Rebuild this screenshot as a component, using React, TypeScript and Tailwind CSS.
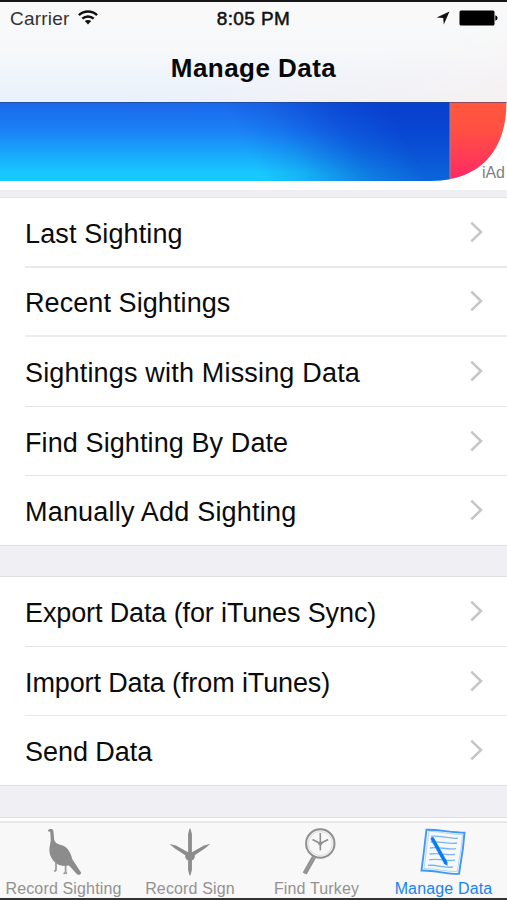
import type { ReactNode } from 'react';

type Row = { label: string; text: string; line: string };

const sightings: Row[] = [
  { label: 'Last Sighting', text: 'tracking-[0.12px]', line: 'h-[70px] border-b-2 border-[#e9e9ea]' },
  { label: 'Recent Sightings', text: 'tracking-[0.08px]', line: 'h-[69px] border-b-2 border-[#ececed]' },
  { label: 'Sightings with Missing Data', text: 'tracking-[0.18px]', line: 'h-[70px] border-b border-[#e4e4e6]' },
  { label: 'Find Sighting By Date', text: 'tracking-[0.1px]', line: 'h-[69px] border-b border-[#e4e4e6]' },
  { label: 'Manually Add Sighting', text: 'tracking-[0.2px]', line: 'h-[69px]' },
];

const transfers: Row[] = [
  { label: 'Export Data (for iTunes Sync)', text: 'tracking-[-0.12px]', line: 'h-[70px] border-b border-[#e4e4e6]' },
  { label: 'Import Data (from iTunes)', text: 'tracking-[-0.12px]', line: 'h-[69px] border-b border-[#e9e9ea]' },
  { label: 'Send Data', text: 'tracking-[-0.05px]', line: 'h-[69px]' },
];

function Chevron() {
  return (
    <svg className="mr-6 mb-px h-[22px] w-[13px] shrink-0" viewBox="0 0 13 22" fill="none" stroke="#c5c5c8" strokeWidth="2.5">
      <path d="M1.3 1.7 11 11 1.3 20.3" />
    </svg>
  );
}

function Group({ rows }: { rows: Row[] }) {
  return (
    <ul className="bg-white pl-[25px]">
      {rows.map((row) => (
        <li key={row.label} className={`flex items-center justify-between ${row.line}`}>
          <span className={`whitespace-nowrap pt-[3px] text-[27px] leading-8 text-[#0b0b0b] ${row.text}`}>{row.label}</span>
          <Chevron />
        </li>
      ))}
    </ul>
  );
}

function StatusBar() {
  return (
    <div className="grid h-[33px] grid-cols-3 items-center text-[19px] leading-6 text-[#111]">
      <div className="flex items-center gap-[9px] pl-[10px]">
        <span className="tracking-[0.2px] text-[#333]">Carrier</span>
        <svg className="mb-[2px] h-[15px] w-5" viewBox="0 0 20 15" fill="none" stroke="#111" strokeWidth="2.5">
          <path d="M.9 5.1C6.2.3 13.8.3 19.1 5.1" />
          <path d="M4.3 8.7C7.6 5.7 12.4 5.7 15.7 8.7" />
          <path d="M6.8 11.1C8.7 9.5 11.3 9.5 13.2 11.1L10 14.6Z" fill="#111" stroke="none" />
        </svg>
      </div>
      <span className="text-center tracking-[0.4px] [-webkit-text-stroke:0.5px_#111]">8:05 PM</span>
      <div className="flex items-center justify-end gap-[9px] pr-[9px]">
        <svg className="mb-px h-[14px] w-[14px]" viewBox="0 0 14 14" fill="#111">
          <path d="M13.5.5 7.8 13.4 7.2 7 .6 6.5Z" />
        </svg>
        <svg className="mb-px h-4 w-[39px]" viewBox="0 0 39 16" fill="#000">
          <rect x=".5" y=".5" width="35" height="15" rx="1.5" />
          <path d="M36.3 5.2Q38.6 5.8 38.6 8T36.3 10.8Z" />
        </svg>
      </div>
    </div>
  );
}

function Banner() {
  return (
    <div className="relative h-[88px] bg-white">
      <svg className="h-[79.5px] w-full" viewBox="0 0 507 79" preserveAspectRatio="none">
        <defs>
          <linearGradient id="sky" x2="0" y2="1">
            <stop stopColor="#1b67e9" />
            <stop offset=".35" stopColor="#1b80f6" />
            <stop offset=".9" stopColor="#18c9fe" />
            <stop offset="1" stopColor="#18c9fe" />
          </linearGradient>
          <linearGradient id="deep" gradientUnits="userSpaceOnUse" x1="240" y1="30" x2="370" y2="-35">
            <stop stopColor="#073dcc" stopOpacity="0" />
            <stop offset=".25" stopColor="#073dcc" stopOpacity=".2" />
            <stop offset=".65" stopColor="#073dcc" stopOpacity=".7" />
            <stop offset="1" stopColor="#073dcc" stopOpacity=".95" />
          </linearGradient>
          <linearGradient id="fade" x2="0" y2="1">
            <stop stopColor="#fff" />
            <stop offset="1" stopColor="#c0c0c0" />
          </linearGradient>
          <mask id="shade">
            <rect width="507" height="79" fill="url(#fade)" />
          </mask>
          <linearGradient id="coral" x2="0" y2="1">
            <stop stopColor="#ff583d" />
            <stop offset=".35" stopColor="#ff5042" />
            <stop offset="1" stopColor="#ff2868" />
          </linearGradient>
          <clipPath id="edge">
            <path d="M0 0H506.3C507 40 487 78.5 430 78.5H0Z" />
          </clipPath>
        </defs>
        <g clipPath="url(#edge)">
          <rect width="450" height="79" fill="url(#sky)" />
          <rect width="450" height="79" fill="url(#deep)" mask="url(#shade)" />
          <rect x="450" width="57" height="79" fill="url(#coral)" />
          <path d="M450 0V79" stroke="#8c8aa3" />
        </g>
        <path d="M0 .5H507" stroke="#263a75" strokeOpacity=".5" />
      </svg>
      <span className="absolute right-[2px] top-[61px] text-[16px] leading-5 text-[#808080]">iAd</span>
    </div>
  );
}

function Turkey() {
  return (
    <svg className="ml-[3px] h-[48px] w-9" viewBox="0 0 36 48" fill="#8c8c8c">
      <path d="M1 2.2C2.5.7 5.8.5 6.4 2.9L7.2 12C8.2 15 11 16.4 15 17.2C20 18.5 23.7 24 25.2 31L34 44.5C34.4 46.5 31.7 47.6 30 46.3L22 37.5C18 38.3 12.5 38 9 35.2C4.3 31.5 2.1 26 2.4 21C2.6 17 3.9 14.2 3.7 10.5L3.2 3.7 1 3.3Z" />
      <path d="M9 35V42L7.3 43.5M18.6 37V44.7L16.5 45.7M18.6 44.7 20 45.5" fill="none" stroke="#999" strokeWidth="1.7" />
    </svg>
  );
}

function Track() {
  return (
    <svg className="h-[48px] w-[42px]" viewBox="0 0 42 48" fill="#8c8c8c">
      <path d="M20.6.5H21.4L22.9 6V24.2L35 17.5 41.5 15.8 36.5 20 25.7 27.2Q26.6 30.3 22.9 32.5V42L21.4 47.5H20.6L19.1 42V32.5Q15.4 30.3 16.3 27.2L5.5 20.3.5 16 7 17.5 19.1 24.2V6Z" />
    </svg>
  );
}

function Magnifier() {
  return (
    <svg className="ml-[5px] h-[48px] w-[34px]" viewBox="0 0 34 48" fill="none" stroke="#8f8f8f">
      <circle cx="18.3" cy="15.5" r="14.2" strokeWidth="2" />
      <circle cx="18.3" cy="15.5" r="12" stroke="#dcdcdc" />
      <path d="M12 29 2.7 45.5" strokeWidth="4.5" />
      <path d="M12 29 2.7 45.5" stroke="#a2a2a2" strokeWidth="1" />
      <path d="M18.3 5V22.5M10.5 11.5 18.3 15.5 26.2 11.5" strokeWidth="1.6" />
      <circle cx="18.3" cy="15.6" r="2" fill="#8f8f8f" stroke="none" />
    </svg>
  );
}

function Notepad() {
  return (
    <svg className="mr-[2px] h-[48px] w-[46px]" viewBox="0 0 46 48" fill="none" stroke="#3e98f8">
      <path d="M6.5 1.7C17 1.4 32 4.5 44.5 4.6L43 20 39 45.8C28 46.5 16 42.2 1.5 42.5L4.2 21Z" strokeWidth="1.9" />
      <path d="M8.8 3.5 6.2 24 4 40.5C17 40.4 27 43.8 37.2 43.6L41.2 20 42.5 6.5C29 6.5 20 3.2 8.8 3.5Z" stroke="#a5cefb" strokeWidth=".8" />
      <path d="M11 8.3C20 7 28 11 38 10.2M10.5 14C20 12.8 29 16.5 37 15M10 20C19 18.4 27 22 36 20.6M9.5 26C18 24.3 27 27.5 35 26.5M9 31.8C18 30 26 33 35 32.2M8 37.4C17 36.3 25 40.5 33 39" stroke="#77b5fa" strokeWidth="1.3" />
      <path d="M12.5 10.8 25.5 34.3" stroke="#087df5" strokeWidth="3.6" strokeLinecap="round" />
      <path d="M23.7 35.3 27.5 38 27.3 33.3Z" fill="#087df5" stroke="none" />
    </svg>
  );
}

function Tab({ label, icon, active }: { label: string; icon: ReactNode; active?: boolean }) {
  return (
    <div className={`flex flex-col items-center pt-[10px] ${active ? 'text-[#1782f5]' : 'text-[#929292]'}`}>
      {icon}
      <span className="mt-[3px] whitespace-nowrap text-[16px] leading-[20px] tracking-[0.15px]">{label}</span>
    </div>
  );
}

export default function App() {
  return (
    <div className="flex h-[900px] w-[507px] flex-col overflow-hidden border-t-2 border-b-2 border-t-[#161616] border-b-[#333] bg-[#efeff4] font-['Liberation_Sans',Arial,sans-serif]">
      <header className="h-[100px] shrink-0 bg-[linear-gradient(170deg,transparent_60%,#fff0eb99),linear-gradient(#f9f9f9_0%,#f6f8fa_50%,#e8f1fc_100%)]">
        <StatusBar />
        <h1 className="pt-[17px] text-center text-[26px] font-bold leading-8 tracking-[0.45px] text-[#080808]">Manage Data</h1>
      </header>
      <Banner />
      <main className="flex flex-1 flex-col">
        <div className="h-2 border-b border-[#e4e4e7]" />
        <Group rows={sightings} />
        <div className="h-8 border-y border-[#dfdfe2]" />
        <Group rows={transfers} />
        <div className="flex-1 border-t border-[#dfdfe2]" />
      </main>
      <nav className="grid h-[81px] shrink-0 grid-cols-[127px_126px_127px_127px] border-t border-[#dedee0] bg-[#f8f8f8] shadow-[inset_0_3px_#fff,inset_0_5px_#e8e8e9]">
        <Tab label="Record Sighting" icon={<Turkey />} />
        <Tab label="Record Sign" icon={<Track />} />
        <Tab label="Find Turkey" icon={<Magnifier />} />
        <Tab label="Manage Data" icon={<Notepad />} active />
      </nav>
    </div>
  );
}
